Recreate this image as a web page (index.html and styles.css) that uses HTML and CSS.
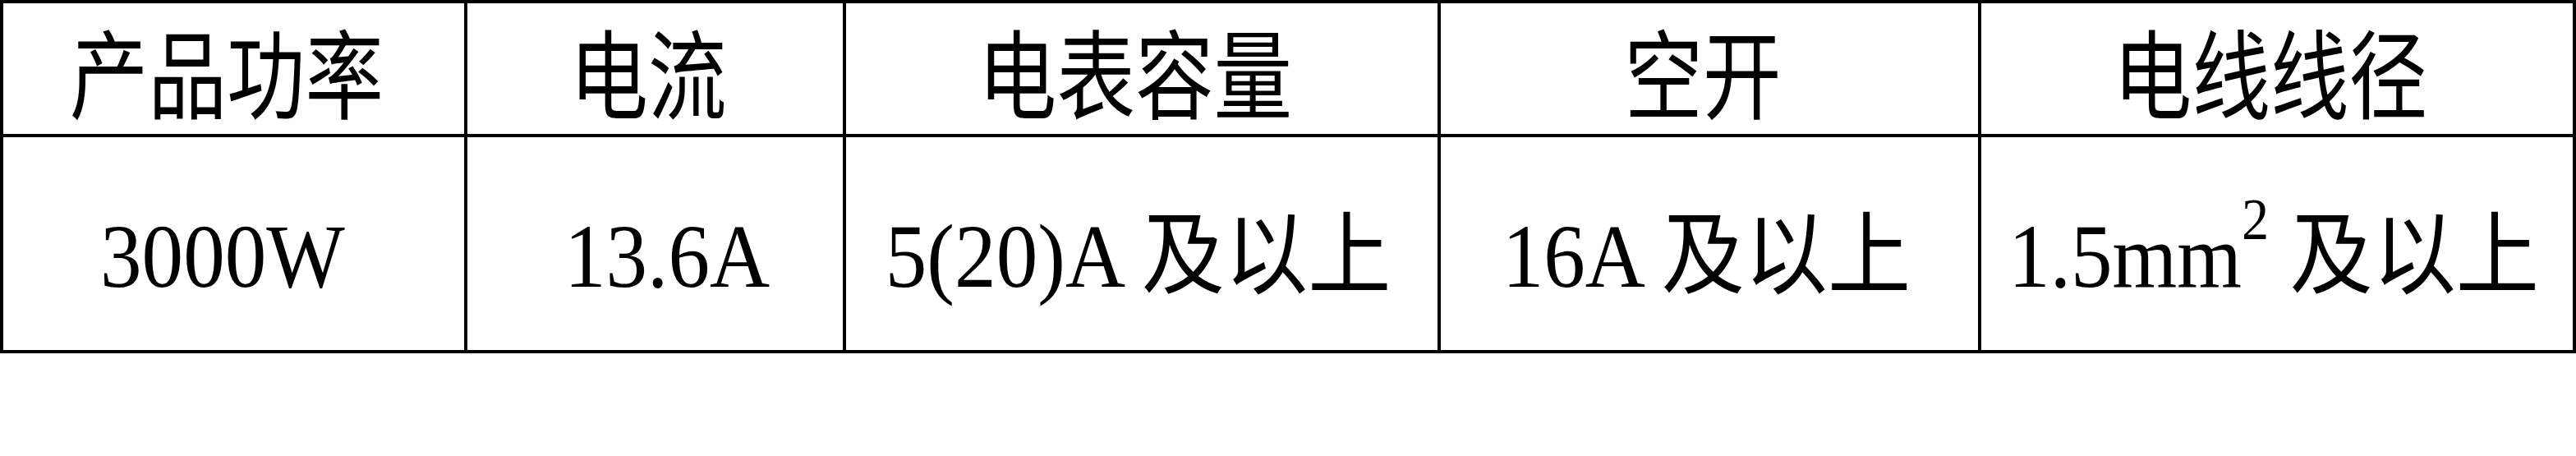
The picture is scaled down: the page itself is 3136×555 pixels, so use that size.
FILE: index.html
```html
<!DOCTYPE html>
<html lang="zh-CN">
<head>
<meta charset="utf-8">
<title>功率对照表</title>
<link rel="stylesheet" href="styles.css">
</head>
<body>
<div class="table">
  <div class="cell head"><span class="txt">产品功率</span></div>
  <div class="cell head"><span class="txt">电流</span></div>
  <div class="cell head"><span class="txt">电表容量</span></div>
  <div class="cell head"><span class="txt">空开</span></div>
  <div class="cell head"><span class="txt">电线线径</span></div>
  <div class="cell body c1"><span class="txt">3000W</span></div>
  <div class="cell body c2"><span class="txt">13.6A</span></div>
  <div class="cell body"><span class="txt">5(20)A 及以上</span></div>
  <div class="cell body"><span class="txt">16A 及以上</span></div>
  <div class="cell body"><span class="txt">1.5mm<sup class="sup">2</sup> 及以上</span></div>
</div>
</body>
</html>
```
FILE: styles.css
```css
html, body {
  margin: 0;
  padding: 0;
  background: #ffffff;
}

.table {
  display: grid;
  grid-template-columns: 561px 457px 720px 654px 720px;
  grid-template-rows: 159px 259px;
  gap: 4px;
  padding: 4px;
  width: 3136px;
  box-sizing: border-box;
  background: #000000;
}

.cell {
  background: #ffffff;
  display: flex;
  align-items: center;
  justify-content: center;
  color: #000000;
}

.txt {
  display: inline-block;
  white-space: nowrap;
  line-height: 1;
}

.head {
  font-family: "Noto Sans CJK SC", sans-serif;
  font-size: 118px;
  padding-top: 2px;
  padding-right: 16px;
}

.head .txt {
  transform: scaleX(0.81);
}

.body {
  font-family: "Liberation Serif", "Noto Sans CJK SC", serif;
  font-size: 110px;
  padding-top: 30px;
  padding-right: 8px;
}

.body .txt {
  transform: scaleX(0.92);
}

.body.c1 {
  padding-right: 28px;
}

.body.c2 {
  padding-right: 0;
  padding-left: 28px;
}

.sup {
  font-size: 72px;
  line-height: 0;
  vertical-align: 58px;
}
```
